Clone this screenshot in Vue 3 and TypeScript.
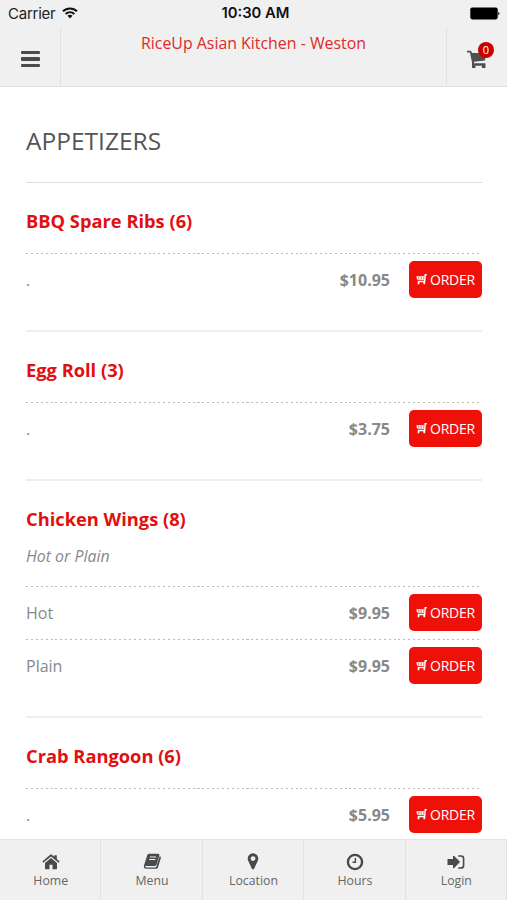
<script setup lang="ts">
interface Choice { label: string; price: string }
interface Dish { name: string; note?: string; choices: Choice[] }
interface Tab { label: string; viewBox: string; path: string; width: number }

const dishes: Dish[] = [
  { name: 'BBQ Spare Ribs (6)', choices: [{ label: '.', price: '$10.95' }] },
  { name: 'Egg Roll (3)', choices: [{ label: '.', price: '$3.75' }] },
  {
    name: 'Chicken Wings (8)',
    note: 'Hot or Plain',
    choices: [
      { label: 'Hot', price: '$9.95' },
      { label: 'Plain', price: '$9.95' },
    ],
  },
  { name: 'Crab Rangoon (6)', choices: [{ label: '.', price: '$5.95' }] },
]

const tabs: Tab[] = [
  {
    label: 'Home', width: 18, viewBox: '0 0 18 16',
    path: 'M9 4.100 15 9V14.600a.6.6 0 0 1-.6.6H10.500V10.800H7.500V15.200H3.600a.6.6 0 0 1-.6-.6V9ZM9 .5c.4 0 .8.1 1.100.4L12.300 2.800V1.200h2.500V5L17.700 7.500l-1 1.200L9 2.500 1.300 8.700 .3 7.500 7.900.9C8.200.6 8.600.5 9 .5Z',
  },
  {
    label: 'Menu', width: 19, viewBox: '0 0 19 17',
    path: 'M6.200 .7H15c1 0 1.600.8 1.300 1.800L13.600 11.500c-.3.9-1 1.400-2 1.400H3.100c-.7 0-1 .3-.8.8.2.5.6.7 1.300.7h8.700c.5 0 .8-.2 1-.7L16.600 3.200c1.300.3 1.500 1 1.200 2L15 14.200c-.3 1-1 1.600-2.100 1.600H3.200C1.500 15.800.6 14.500.9 12.800L4.200 2.300C4.500 1.300 5.200.7 6.200.7ZM7 3.600 6.700 4.600H13L13.300 3.600ZM6.300 6 6 7H12.300L12.600 6Z',
  },
  {
    label: 'Location', width: 12, viewBox: '0 0 12 17',
    path: 'M6 .3a5.300 5.300 0 0 1 5.300 5.300c0 .9-.2 1.600-.5 2.200L7.100 15.700c-.4.9-1.800.9-2.200 0L1.200 7.800C.9 7.200.7 6.500.7 5.600A5.300 5.300 0 0 1 6 .3ZM6 3.200a2.400 2.400 0 1 0 0 4.800 2.400 2.400 0 0 0 0-4.800Z',
  },
  {
    label: 'Hours', width: 18, viewBox: '0 0 18 18',
    path: 'M9 .7a8.300 8.300 0 1 1 0 16.600A8.300 8.300 0 0 1 9 .7ZM9 3.100a5.900 5.900 0 1 0 0 11.800A5.900 5.900 0 0 0 9 3.100ZM8.700 4.900H10.100V9.900H6.500V8.600H8.700Z',
  },
  {
    label: 'Login', width: 18, viewBox: '0 0 18 16',
    path: 'M.5 5.100H6V2.500c0-.7.7-1 1.200-.5l5.300 5.300c.4.4.4.9 0 1.300L7.200 13.900C6.700 14.400 6 14.100 6 13.400V10.900H.5ZM11.200 1.200H14a3.400 3.400 0 0 1 3.400 3.400v6.800a3.400 3.400 0 0 1-3.400 3.400H11.200V13.200H13.900c1.100 0 1.900-.8 1.900-1.900V4.700c0-1.100-.8-1.900-1.900-1.900H11.200Z',
  },
]
</script>

<template>
  <div class="phone">
    <header>
      <div class="status">
        <div class="carrier">
          <span>Carrier</span>
          <svg width="16" height="12" viewBox="0 0 16 12">
            <g fill="none" stroke="#111" stroke-width="2">
              <path d="M1 4.300C5 .4 11 .4 15 4.300" />
              <path d="M3.600 7C6.200 4.600 9.800 4.600 12.400 7" />
            </g>
            <path d="M8 11.400 5.500 8.800C6.900 7.500 9.100 7.500 10.500 8.800Z" fill="#111" />
          </svg>
        </div>
        <div class="time">10:30 AM</div>
        <div class="battery">
          <svg width="30" height="13" viewBox="0 0 30 13">
            <rect x=".3" y=".4" width="27.400" height="12" rx="1.800" />
            <path d="M28.300 4.700a2 2 0 0 1 0 3.600Z" />
          </svg>
        </div>
      </div>
      <div class="bar">
        <button class="menu" aria-label="Menu"><i /><i /><i /></button>
        <h1>RiceUp Asian Kitchen - Weston</h1>
        <button class="cart" aria-label="Cart">
          <svg width="20" height="19" viewBox="0 0 20 19" fill="#505050">
            <path d="M0 .8H4L5 3H19L18 10.400 7 11.700V13.200H18.500V18H14.900V15.700H8.500V18H5V12.300L2.900 2.500H0Z" />
          </svg>
          <span class="badge">0</span>
        </button>
      </div>
    </header>

    <main>
      <h2>APPETIZERS</h2>
      <section v-for="dish in dishes" :key="dish.name" class="dish">
        <h3>{{ dish.name }}</h3>
        <p v-if="dish.note" class="note">{{ dish.note }}</p>
        <div class="choices">
          <div v-for="choice in dish.choices" :key="choice.label" class="choice">
            <span class="label">{{ choice.label }}</span>
            <strong>{{ choice.price }}</strong>
            <button class="order">
              <svg width="11" height="11" viewBox="0 0 11 11" fill="none" stroke="#fff">
                <path d="M10.800 .8H9.200L8.700 7.500H2" stroke-width="1.400" />
                <path d="M.5 2.900H8.800M1.500 5.200H8.500M1 2.900 1.700 5.400M4 3V5.300M6.500 3V5.300" stroke-width="1.200" />
                <path d="M2.500 7.500V10.200M8.300 7.500V10.200" stroke-width="1.700" />
              </svg>
              <span>ORDER</span>
            </button>
          </div>
        </div>
      </section>
    </main>

    <nav>
      <a v-for="tab in tabs" :key="tab.label">
        <span class="glyph">
          <svg :width="tab.width" :viewBox="tab.viewBox"><path :d="tab.path" fill-rule="evenodd" /></svg>
        </span>
        <span>{{ tab.label }}</span>
      </a>
    </nav>
  </div>
</template>

<style>
body { margin: 0; background: #fff; }
</style>

<style scoped>
* { box-sizing: border-box; }
.phone { width: 507px; height: 900px; overflow: hidden; display: flex; flex-direction: column; font-family: "Open Sans", sans-serif; color: #888; }
button { border: 0; padding: 0; background: none; font: inherit; }
svg { display: block; flex: none; }
header { flex: none; height: 87px; background: #f0f0f0; border-bottom: 1px solid #e0e0e0; }
.status { height: 27px; display: grid; grid-template-columns: 1fr auto 1fr; align-items: center; padding: 0 7px 0 8px; font: 15px/27px Inter, sans-serif; color: #222; }
.carrier { display: flex; align-items: center; gap: 7px; letter-spacing: -0.250px; }
.carrier svg { margin-top: -2px; }
.time { font-weight: 600; font-size: 14.800px; color: #111; padding-left: 3px; }
.battery { display: flex; justify-content: flex-end; fill: #000; }
.bar { height: 59px; display: flex; }
.menu { width: 61px; flex: none; border-right: 1px solid #e2e2e2; display: flex; flex-direction: column; align-items: center; justify-content: center; gap: 3px; padding-top: 5px; }
.menu i { width: 19px; height: 3.400px; border-radius: 1px; background: #4c4c4c; }
h1 { flex: 1; margin: 0; text-align: center; font-size: 15.900px; font-weight: 400; line-height: 32px; color: #df2a2a; }
.cart { position: relative; width: 61px; flex: none; border-left: 1px solid #e2e2e2; padding: 23px 0 0 20px; display: flex; align-items: flex-start; }
.badge { position: absolute; left: 31px; top: 15px; width: 16px; height: 16px; border-radius: 50%; background: #c90000; color: #fff; font-size: 11px; line-height: 16px; text-align: center; }
main { flex: 1; min-height: 0; overflow: hidden; padding: 0 25px 0 26px; }
h2 { margin: 0; height: 96px; padding-top: 38px; border-bottom: 1px solid #ddd; font-size: 24.500px; line-height: 32px; font-weight: 400; color: #555; }
.dish { padding: 26px 0 23.500px; border-bottom: 2px solid #eee; }
h3 { margin: 0; font-size: 18.300px; line-height: 24px; font-weight: 700; color: #e01010; }
.note { margin: 13px 0 -2.500px; font-size: 15.900px; line-height: 24px; font-style: italic; }
.choices { padding-top: 20px; }
.choice { height: 53.500px; padding-top: 8px; display: flex; align-items: flex-start; line-height: 38px; font-size: 16px; background: repeating-linear-gradient(90deg, #bbb 0 2px, transparent 2px 4.900px) top / 100% 1px no-repeat; }
.label { flex: 1; }
strong { font-weight: 700; margin-right: 19px; }
.order { width: 73px; height: 37px; border-radius: 5px; background: #ee1009; color: #fff; display: flex; align-items: center; justify-content: center; gap: 3px; font-size: 14px; line-height: 37px; letter-spacing: -0.2px; }
nav { flex: none; height: 61px; display: grid; grid-template-columns: repeat(5, 1fr); background: #f0f0f0; border-top: 1px solid #e4e4e4; }
nav a { display: flex; flex-direction: column; align-items: center; padding: 11px 0 0 1px; border-right: 1px solid #e2e2e2; font-size: 12.300px; line-height: 18px; color: #666; }
.glyph { height: 21px; display: flex; align-items: center; fill: #4a4a4a; }
</style>
